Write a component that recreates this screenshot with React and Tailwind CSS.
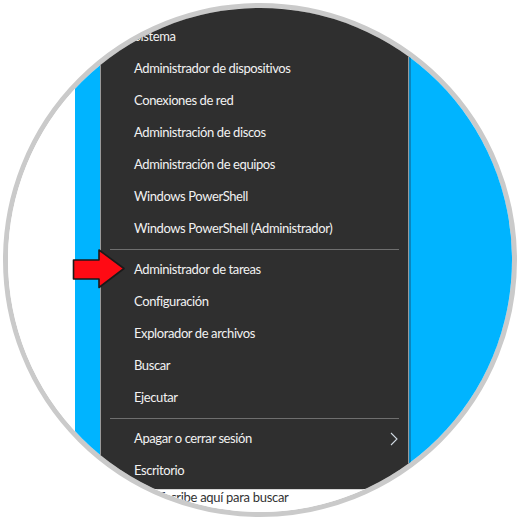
import { Fragment } from "react";

const groups = [
  [
    "Sistema",
    "Administrador de dispositivos",
    "Conexiones de red",
    "Administración de discos",
    "Administración de equipos",
    "Windows PowerShell",
    "Windows PowerShell (Administrador)",
  ],
  [
    "Administrador de tareas",
    "Configuración",
    "Explorador de archivos",
    "Buscar",
    "Ejecutar",
  ],
  ["Apagar o cerrar sesión", "Escritorio"],
];

function RedArrow() {
  return (
    <svg width="56" height="42" viewBox="0 0 56 42" className="absolute left-[72px] top-[248px]">
      <polygon
        points="1.5,12 27,12 27,2 52,20.5 27,39.5 27,31 1.5,31"
        fill="#ff0a14"
        stroke="#1a1a1a"
        strokeWidth="1.6"
        strokeLinejoin="round"
      />
    </svg>
  );
}

export default function App() {
  return (
    <div className="relative flex h-[520px] w-[520px] items-center justify-center bg-white font-['Lato','Noto_Sans',sans-serif]">
      <div className="flex h-[514px] w-[514px] flex-col overflow-hidden rounded-full border-[5px] border-[#cacaca] bg-white">
        <div className="flex h-[481px] shrink-0">
          <div className="w-[67px] bg-white" />
          <div className="w-[25px] bg-[#00b4ff]" />
          <div className="w-[309px] border-x border-[#9a9a9a] bg-[#2f2f2f] pt-[13px] text-[13px] tracking-[-0.4px] text-[#f2f2f2]">
            {groups.map((items, gi) => (
              <Fragment key={gi}>
                {gi > 0 && (
                  <div className="h-[9px] px-[9px] pt-[4px]">
                    <div className="h-px bg-[#6f6f6f]" />
                  </div>
                )}
                {items.map((label) => (
                  <div key={label} className="flex h-[32px] items-center justify-between pl-[33px] pr-[10px]">
                    <span>{label}</span>
                    {label === "Apagar o cerrar sesión" && (
                      <svg width="8" height="14" viewBox="0 0 8 14">
                        <polyline points="1,1 7,7 1,13" fill="none" stroke="#cfd8e0" strokeWidth="1.1" />
                      </svg>
                    )}
                  </div>
                ))}
              </Fragment>
            ))}
          </div>
          <div className="flex-1 border-l-2 border-[#0a86bf] bg-[#00b4ff]" />
        </div>
        <div className="flex-1 border-t border-[#d6d6d6] bg-white pl-[150px] text-[13px] leading-[15px] tracking-[-0.3px] text-[#333333]">
          Escribe aquí para buscar
        </div>
      </div>
      <RedArrow />
    </div>
  );
}
